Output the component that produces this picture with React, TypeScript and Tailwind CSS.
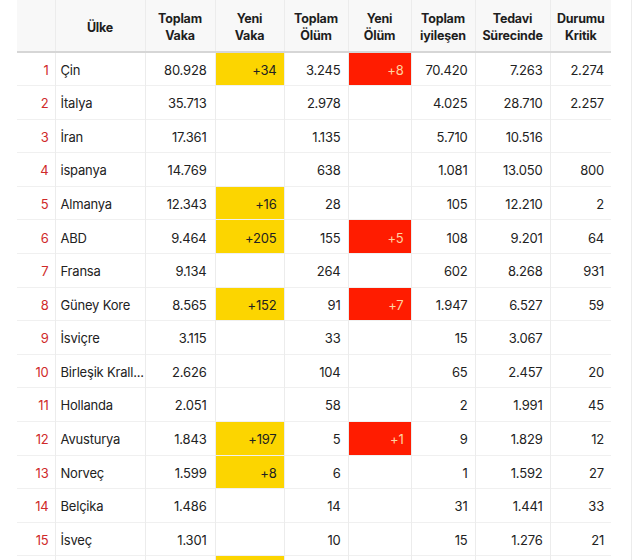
import React from "react";

type Row = [number | "", string, string, string, string, string, string, string, string];

const ROWS: Row[] = [
  [1, "Çin", "80.928", "+34", "3.245", "+8", "70.420", "7.263", "2.274"],
  [2, "İtalya", "35.713", "", "2.978", "", "4.025", "28.710", "2.257"],
  [3, "İran", "17.361", "", "1.135", "", "5.710", "10.516", ""],
  [4, "ispanya", "14.769", "", "638", "", "1.081", "13.050", "800"],
  [5, "Almanya", "12.343", "+16", "28", "", "105", "12.210", "2"],
  [6, "ABD", "9.464", "+205", "155", "+5", "108", "9.201", "64"],
  [7, "Fransa", "9.134", "", "264", "", "602", "8.268", "931"],
  [8, "Güney Kore", "8.565", "+152", "91", "+7", "1.947", "6.527", "59"],
  [9, "İsviçre", "3.115", "", "33", "", "15", "3.067", ""],
  [10, "Birleşik Krall...", "2.626", "", "104", "", "65", "2.457", "20"],
  [11, "Hollanda", "2.051", "", "58", "", "2", "1.991", "45"],
  [12, "Avusturya", "1.843", "+197", "5", "+1", "9", "1.829", "12"],
  [13, "Norveç", "1.599", "+8", "6", "", "1", "1.592", "27"],
  [14, "Belçika", "1.486", "", "14", "", "31", "1.441", "33"],
  [15, "İsveç", "1.301", "", "10", "", "15", "1.276", "21"],
];

const HEADERS: [string, string][] = [
  ["", ""],
  ["Ülke", ""],
  ["Toplam", "Vaka"],
  ["Yeni", "Vaka"],
  ["Toplam", "Ölüm"],
  ["Yeni", "Ölüm"],
  ["Toplam", "iyileşen"],
  ["Tedavi", "Sürecinde"],
  ["Durumu", "Kritik"],
];

const cell = "border-l border-[#ececec]";

export default function App() {
  return (
    <div className="w-[640px] h-[560px] overflow-hidden bg-white" style={{ fontFamily: "Inter, 'Open Sans', sans-serif" }}>
      <div className="w-[632px] h-full border-r border-[#ececec] pl-[17px]">
        <table className="table-fixed w-[594px] border-collapse text-[13px] text-[#222] tracking-[-0.2px]">
          <colgroup>
            <col className="w-[38px]" />
            <col className="w-[90px]" />
            <col className="w-[70px]" />
            <col className="w-[69px]" />
            <col className="w-[64px]" />
            <col className="w-[63px]" />
            <col className="w-[64px]" />
            <col className="w-[75px]" />
            <col className="w-[61px]" />
          </colgroup>
          <thead>
            <tr className="h-[52px] bg-[#f8f8f8] border-b-2 border-[#d6d6d6]">
              {HEADERS.map(([a, b], i) => (
                <th key={i} className="border-l border-[#ececec] first:border-l-0 text-center align-middle font-bold text-[12.5px] leading-[17px] text-[#1e1e1e] pt-[3px]">
                  {a}
                  {b && <br />}
                  {b}
                </th>
              ))}
            </tr>
          </thead>
          <tbody>
            {ROWS.map((r) => (
              <tr key={r[0]} className="h-[33.6px] border-b border-[#f0f0f0] [&>td]:pt-[3px]">
                <td className="text-right pr-[6px] text-[#cf2a2a]">{r[0]}</td>
                <td className={`pl-[5px] ${cell} whitespace-nowrap overflow-hidden`}>{r[1]}</td>
                <td className={`text-right pr-[8px] ${cell}`}>{r[2]}</td>
                <td className={`text-right pr-[7px] ${cell} ${r[3] ? "bg-[#fcd500]" : ""}`}>{r[3]}</td>
                <td className={`text-right pr-[7px] ${cell}`}>{r[4]}</td>
                <td className={`text-right pr-[7px] ${cell} ${r[5] ? "bg-[#ff1c00] text-[#ffd3a0]" : ""}`}>{r[5]}</td>
                <td className={`text-right pr-[7px] ${cell}`}>{r[6]}</td>
                <td className={`text-right pr-[7px] ${cell}`}>{r[7]}</td>
                <td className={`text-right pr-[7px] ${cell}`}>{r[8]}</td>
              </tr>
            ))}
            {/* next row, only its top edge is in view */}
            <tr className="h-[33.6px]">
              <td />
              <td className={cell} />
              <td className={cell} />
              <td className={`${cell} bg-[#fcd500]`} />
              <td className={cell} />
              <td className={cell} />
              <td className={cell} />
              <td className={cell} />
              <td className={cell} />
            </tr>
          </tbody>
        </table>
      </div>
    </div>
  );
}
